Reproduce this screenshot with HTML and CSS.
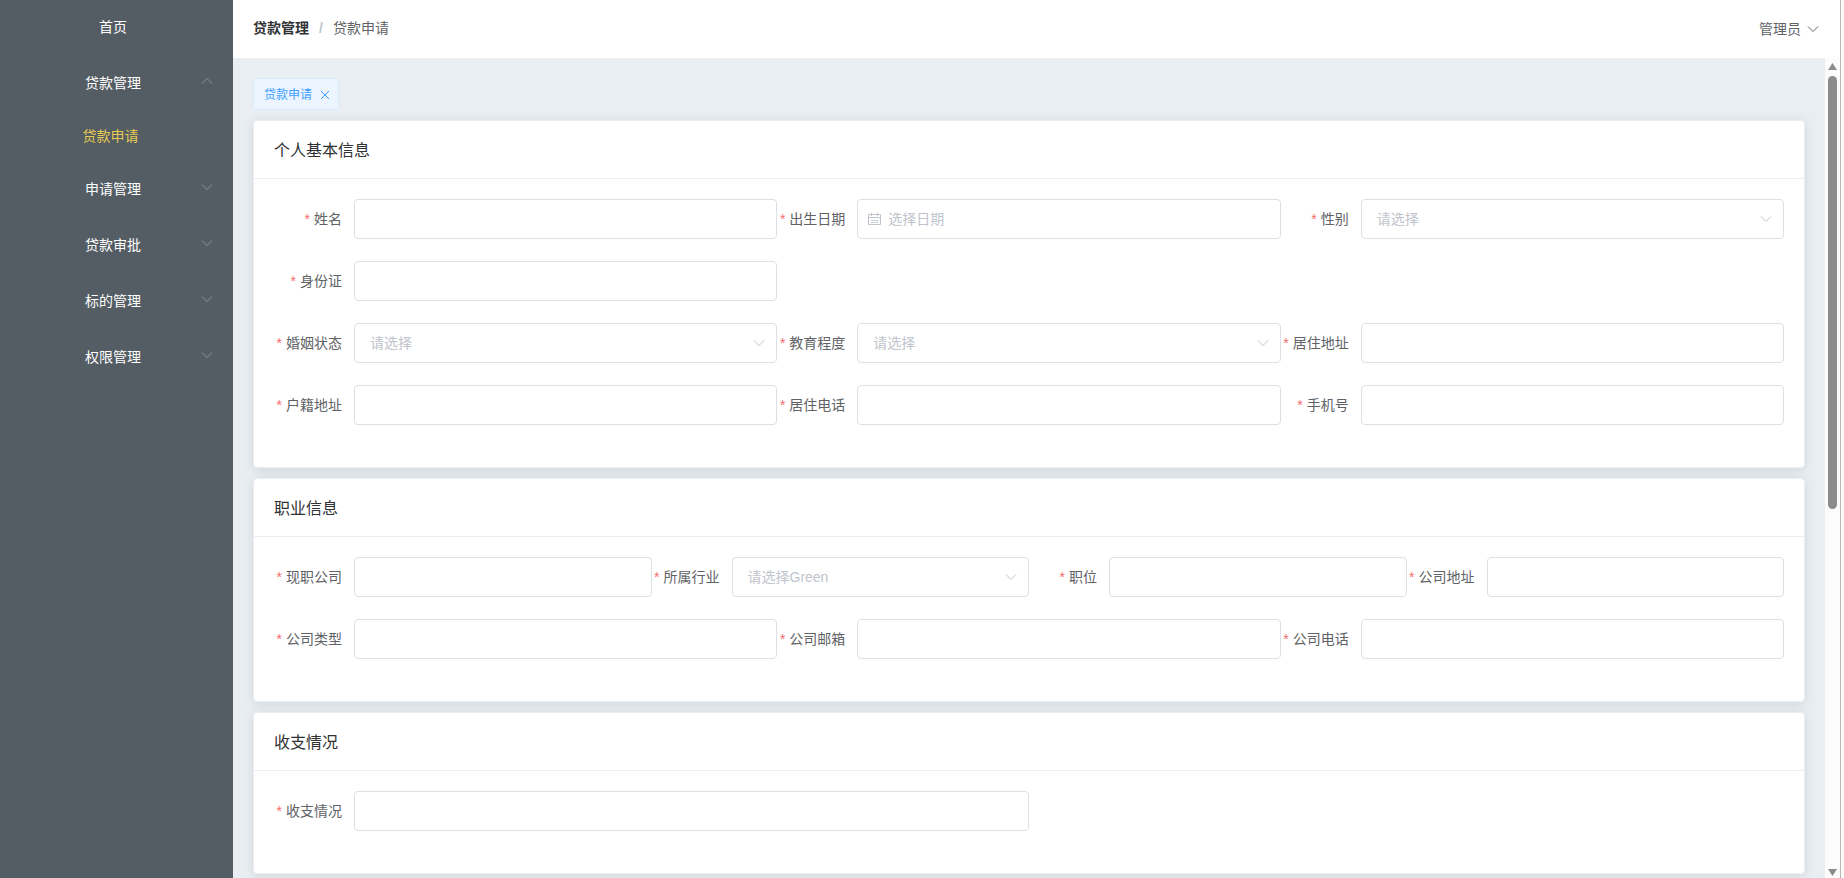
FILE: index.html
```html
<!DOCTYPE html>
<html lang="zh-CN">
<head>
<meta charset="utf-8">
<title>贷款申请</title>
<link rel="stylesheet" href="styles.css">
</head>
<body>
<svg class="sprite" aria-hidden="true">
  <symbol id="down" viewBox="0 0 14 14"><path d="M2 4.5l5 5 5-5"/></symbol>
  <symbol id="up" viewBox="0 0 14 14"><path d="M2 9.5l5-5 5 5"/></symbol>
  <symbol id="close" viewBox="0 0 12 12"><path d="M2 2l8 8M10 2l-8 8"/></symbol>
  <symbol id="calendar" viewBox="0 0 14 14"><path d="M.5 2.500h12v10H.5zM.5 5.500h12M3.500 1v3M9.500 1v3M3 8.500h2M5.500 8.500h2M8 8.500h2M3 10.500h2M5.500 10.500h2M8 10.500h2"/></symbol>
</svg>
<div class="app">
  <nav class="sidebar">
    <a class="menu-item" href="#"><span>首页</span></a>
    <button class="menu-item" type="button"><span>贷款管理</span><svg class="menu-arrow"><use href="#up"/></svg></button>
    <a class="menu-item menu-sub active" href="#"><span>贷款申请</span></a>
    <button class="menu-item" type="button"><span>申请管理</span><svg class="menu-arrow"><use href="#down"/></svg></button>
    <button class="menu-item" type="button"><span>贷款审批</span><svg class="menu-arrow"><use href="#down"/></svg></button>
    <button class="menu-item" type="button"><span>标的管理</span><svg class="menu-arrow"><use href="#down"/></svg></button>
    <button class="menu-item" type="button"><span>权限管理</span><svg class="menu-arrow"><use href="#down"/></svg></button>
  </nav>
  <div class="page">
    <header class="topbar">
      <div class="breadcrumb"><a class="crumb-root" href="#">贷款管理</a><span class="slash">/</span><span>贷款申请</span></div>
      <button class="user" type="button">管理员<svg class="icon"><use href="#down"/></svg></button>
    </header>
    <div class="viewport">
      <main class="content">
        <div class="tag">贷款申请<button class="tag-close" type="button" aria-label="关闭"><svg class="icon-close"><use href="#close"/></svg></button></div>

        <section class="card">
          <h2 class="card-head">个人基本信息</h2>
          <form class="card-body">
            <div class="row">
              <div class="field third"><label for="name">姓名</label><input class="control" id="name" type="text"></div>
              <div class="field third"><label for="birth">出生日期</label><div class="box"><input class="control date" id="birth" type="text" placeholder="选择日期"><svg class="icon lead"><use href="#calendar"/></svg></div></div>
              <div class="field third"><label for="sex">性别</label><div class="box"><select class="control" id="sex"><option>请选择</option></select><svg class="icon trail"><use href="#down"/></svg></div></div>
              <div class="field third"><label for="idcard">身份证</label><input class="control" id="idcard" type="text"></div>
            </div>
            <div class="row">
              <div class="field third"><label for="marriage">婚姻状态</label><div class="box"><select class="control" id="marriage"><option>请选择</option></select><svg class="icon trail"><use href="#down"/></svg></div></div>
              <div class="field third"><label for="education">教育程度</label><div class="box"><select class="control" id="education"><option>请选择</option></select><svg class="icon trail"><use href="#down"/></svg></div></div>
              <div class="field third"><label for="address">居住地址</label><input class="control" id="address" type="text"></div>
              <div class="field third"><label for="household">户籍地址</label><input class="control" id="household" type="text"></div>
              <div class="field third"><label for="phone">居住电话</label><input class="control" id="phone" type="text"></div>
              <div class="field third"><label for="mobile">手机号</label><input class="control" id="mobile" type="text"></div>
            </div>
          </form>
        </section>

        <section class="card">
          <h2 class="card-head">职业信息</h2>
          <form class="card-body">
            <div class="row">
              <div class="field quarter"><label for="company">现职公司</label><input class="control" id="company" type="text"></div>
              <div class="field quarter"><label for="trade">所属行业</label><div class="box"><select class="control" id="trade"><option>请选择Green</option></select><svg class="icon trail"><use href="#down"/></svg></div></div>
              <div class="field quarter"><label for="position">职位</label><input class="control" id="position" type="text"></div>
              <div class="field quarter"><label for="company-address">公司地址</label><input class="control" id="company-address" type="text"></div>
            </div>
            <div class="row">
              <div class="field third"><label for="company-type">公司类型</label><input class="control" id="company-type" type="text"></div>
              <div class="field third"><label for="company-mail">公司邮箱</label><input class="control" id="company-mail" type="text"></div>
              <div class="field third"><label for="company-phone">公司电话</label><input class="control" id="company-phone" type="text"></div>
            </div>
          </form>
        </section>

        <section class="card">
          <h2 class="card-head">收支情况</h2>
          <form class="card-body">
            <div class="row">
              <div class="field half"><label for="income">收支情况</label><input class="control" id="income" type="text"></div>
            </div>
          </form>
        </section>
      </main>
      <div class="scrollbar" aria-hidden="true">
        <svg class="scroll-arrow" viewBox="0 0 9 7"><path d="M4.500 0L9 7H0z"/></svg>
        <div class="track"><div class="thumb"></div></div>
        <svg class="scroll-arrow" viewBox="0 0 9 7"><path d="M4.500 7L9 0H0z"/></svg>
      </div>
    </div>
  </div>
  <div class="edge"></div>
</div>
</body>
</html>
```
FILE: styles.css
```css
* { box-sizing: border-box; }

body {
  margin: 0;
  font: 14px/20px "Liberation Sans", "Noto Sans CJK SC", sans-serif;
  color: #606266;
  background: #fff;
}

button, input, select { font: inherit; color: inherit; }
button { padding: 0; border: 0; background: none; cursor: pointer; }
a { color: inherit; text-decoration: none; }
svg { display: block; fill: none; stroke: currentColor; }
.sprite { display: none; }
.icon { width: 14px; height: 14px; }

.app { display: flex; height: 100vh; }

/* Side menu */
.sidebar {
  flex: 0 0 233px;
  background: #545c64;
  color: #fff;
}
.menu-item {
  display: grid;
  grid-template-columns: 1fr auto 1fr;
  align-items: center;
  width: 100%;
  height: 56px;
  padding: 0 19px 2px 12px;
}
.menu-item span { grid-column: 2; }
.menu-arrow {
  justify-self: end;
  width: 14px;
  height: 14px;
  margin-bottom: 4px;
  color: #909399;
}
.menu-sub { height: 50px; padding: 0 20px 2px 8px; }
.active { color: #e6cb52; }

/* Header */
.page {
  flex: 1;
  min-width: 0;
  display: flex;
  flex-direction: column;
}
.topbar {
  flex: 0 0 58px;
  display: flex;
  align-items: center;
  justify-content: space-between;
  padding: 0 20px;
}
.breadcrumb { display: flex; padding-bottom: 2px; }
.crumb-root { font-weight: 700; color: #303133; }
.slash { margin: 0 10px; font-weight: 700; color: #c0c4cc; }
.user { display: flex; align-items: center; gap: 5px; }

/* Scrolling area */
.viewport { flex: 1; min-height: 0; display: flex; }
.content {
  flex: 1;
  min-width: 0;
  padding: 20px;
  overflow-y: auto;
  scrollbar-width: none;
  background: #e9eef3;
}
.scrollbar {
  flex: 0 0 15px;
  display: flex;
  flex-direction: column;
  align-items: center;
  gap: 6px;
  padding: 5px 0 2px;
  background: #fcfcfc;
}
.scroll-arrow { width: 9px; height: 7px; fill: #8b8b8b; stroke: none; }
.track { flex: 1; width: 9px; }
.thumb { height: 55%; border-radius: 5px; background: #8b8b8b; }
.edge { flex: 0 0 4px; background: #f9f9f9; border-left: 1px solid #b8b8b8; }

/* Open page tag */
.tag {
  display: inline-flex;
  align-items: center;
  gap: 7px;
  height: 32px;
  margin-bottom: 10px;
  padding: 2px 7px 0 10px;
  border: 1px solid #d9ecff;
  border-radius: 4px;
  background: #ecf5ff;
  color: #409eff;
  font-size: 12px;
  vertical-align: top;
}
.icon-close { width: 12px; height: 12px; }

/* Cards */
.card {
  margin-bottom: 10px;
  border: 1px solid #ebeef5;
  border-radius: 4px;
  background: #fff;
  box-shadow: 0 2px 12px rgba(0, 0, 0, .1);
}
.card-head {
  margin: 0;
  padding: 19px 20px 17px;
  border-bottom: 1px solid #ebeef5;
  font-size: 16px;
  font-weight: 400;
  line-height: 21px;
  color: #303133;
}
.card-body { padding: 20px; }

/* Form */
.row { display: flex; flex-wrap: wrap; }
.field { display: flex; margin-bottom: 22px; }
.third { width: calc(100% / 3); }
.quarter { width: 25%; }
.half { width: 50%; }
label {
  flex: 0 0 80px;
  padding-right: 12px;
  line-height: 40px;
  text-align: right;
  white-space: nowrap;
}
label::before { content: "*"; margin-right: 4px; color: #f56c6c; }
.control {
  flex: 1;
  width: 100%;
  min-width: 0;
  height: 40px;
  padding: 0 15px;
  border: 1px solid #dcdfe6;
  border-radius: 4px;
  background: #fff;
  outline: none;
}
.control::placeholder { color: #c0c4cc; opacity: 1; }
select.control { appearance: none; color: #c0c4cc; }
.date { padding-left: 30px; }
.box { flex: 1; min-width: 0; display: grid; align-items: center; color: #c0c4cc; }
.box > * { grid-area: 1 / 1; }
.icon.lead { margin-left: 11px; pointer-events: none; }
.icon.trail { justify-self: end; margin-right: 11px; pointer-events: none; }
```
